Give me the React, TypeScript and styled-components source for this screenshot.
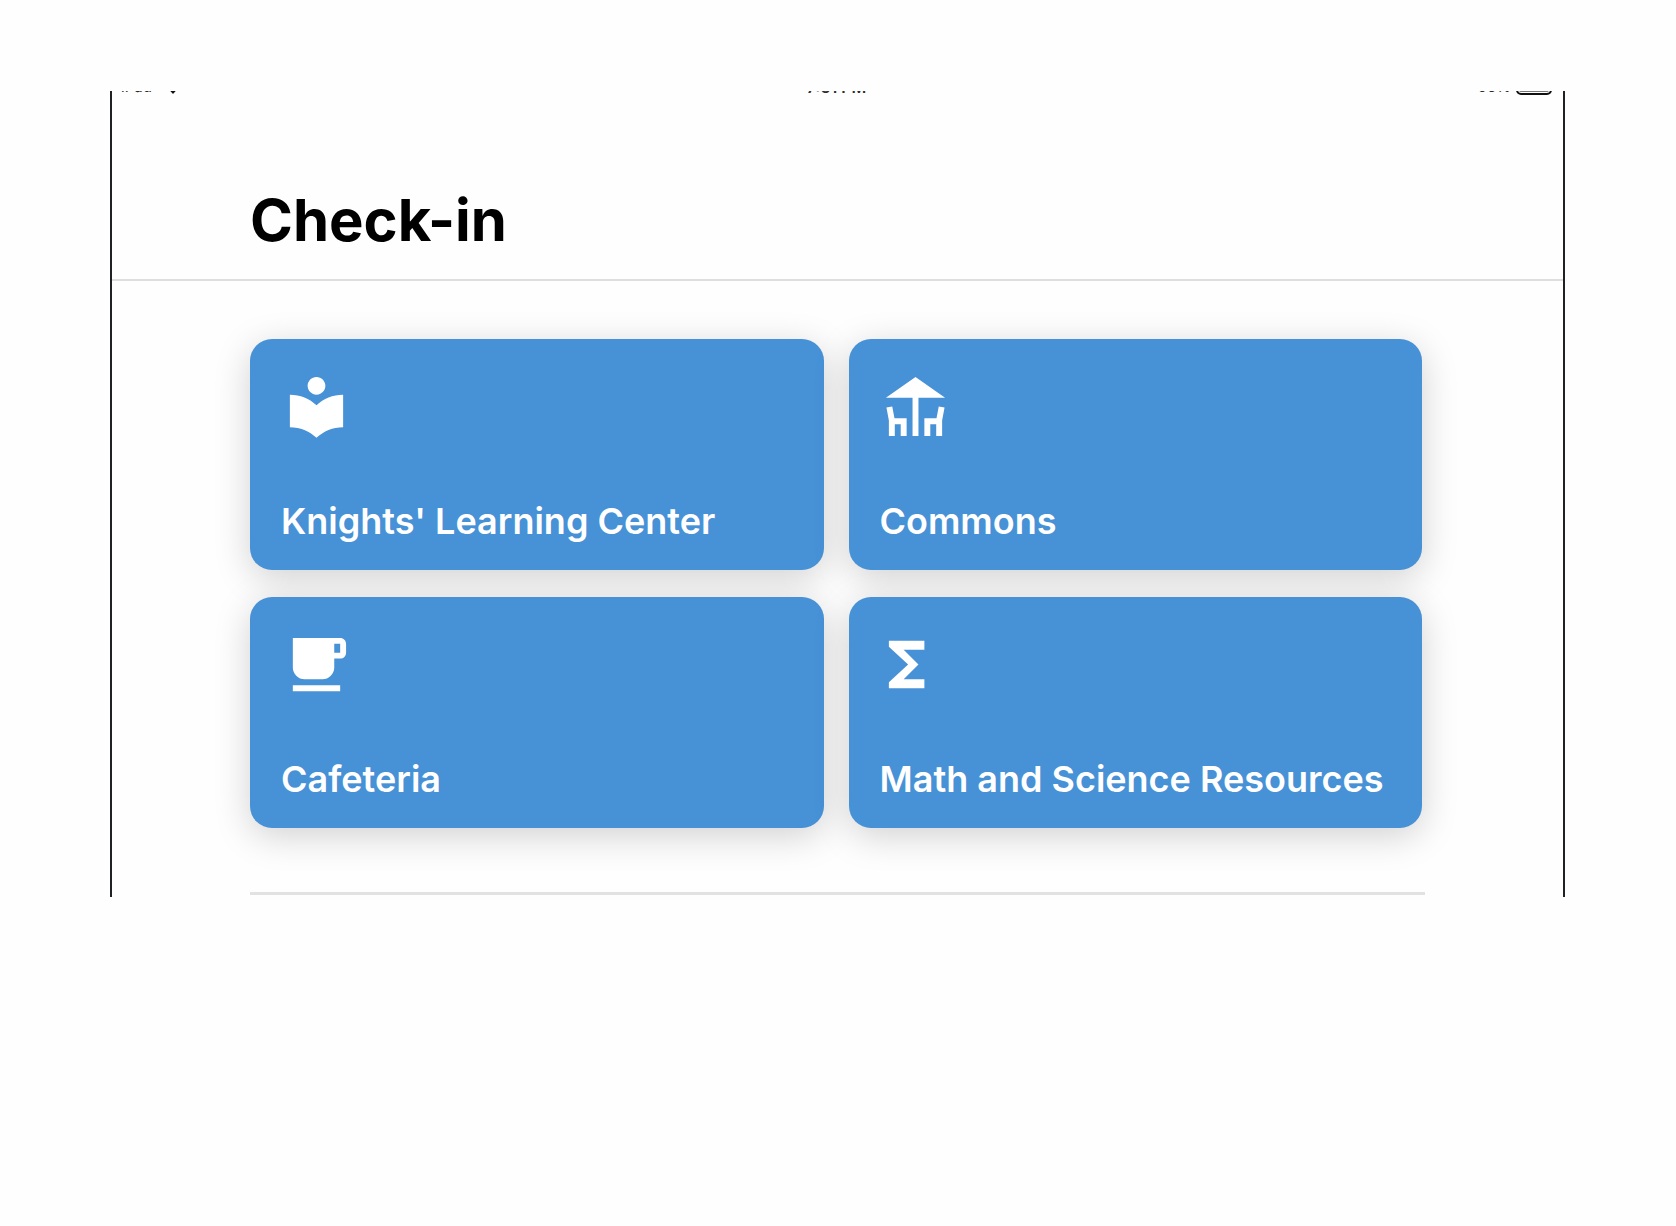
import React from "react";
import styled, { createGlobalStyle } from "styled-components";

const GlobalStyle = createGlobalStyle`
  * { box-sizing: border-box; }
  body {
    margin: 0;
    background: #fefefe;
    color: #000;
    font-family: Inter, "Liberation Sans", sans-serif;
  }
`;

const Page = styled.div`
  padding: 91px 111px 0 110px;
`;

const Screen = styled.main`
  display: flex;
  flex-direction: column;
  overflow: hidden;
  border-left: 2px solid #202124;
  border-right: 2px solid #202124;
  background: #fefefe;
`;

const StatusBar = styled.div`
  display: grid;
  grid-template-columns: 1fr auto 1fr;
  align-items: center;
  height: 20px;
  margin-top: -14px;
  padding: 0 11px 0 9px;
  font-size: 15px;
  line-height: 20px;
  color: #2b2b2b;
`;

const StatusGroup = styled.div<{ $end?: boolean }>`
  display: flex;
  align-items: center;
  justify-content: ${(p) => (p.$end ? "flex-end" : "flex-start")};
  gap: ${(p) => (p.$end ? "5px" : "12px")};
`;

const Clock = styled.time`
  font-size: 16px;
  font-weight: 600;
`;

const Battery = styled.span`
  display: flex;
  width: 36px;
  height: 16px;
  padding: 1px;
  border: 2px solid #111;
  border-radius: 5px;

  &::before {
    content: "";
    flex: 1;
    border-radius: 2px;
    background: #777;
  }
`;

const Header = styled.header`
  padding: 87px 138px 23px;
  border-bottom: 2px solid #dedede;
`;

const Title = styled.h1`
  margin: 0;
  font-size: 58px;
  line-height: 72px;
  font-weight: 700;
`;

const Content = styled.section`
  padding: 58px 138px 2px;
`;

const Grid = styled.div`
  display: grid;
  grid-template-columns: 1fr 1fr;
  gap: 27px 25px;
  padding-right: 3px;
  padding-bottom: 64px;
  border-bottom: 3px solid #e2e2e2;
`;

const Card = styled.button`
  display: flex;
  flex-direction: column;
  align-items: flex-start;
  justify-content: space-between;
  min-width: 0;
  height: 231px;
  padding: 32px 30px 27px 31px;
  border: 0;
  border-radius: 22px;
  background: #4791d6;
  box-shadow: 0 8px 36px rgba(0, 0, 0, 0.18);
  color: #fff;
  font: inherit;
  text-align: left;
  cursor: pointer;
`;

const CardIcon = styled.svg`
  width: 71px;
  height: 71px;
  fill: currentColor;
`;

const CardLabel = styled.span`
  font-size: 36px;
  line-height: 44px;
  font-weight: 600;
  white-space: nowrap;
`;

const places = [
  {
    name: "Knights' Learning Center",
    viewBox: "0 0 24 24",
    path: "M12 11.55C9.64 9.35 6.48 8 3 8v11c3.54 0 6.52 1.35 9 3.55 2.36-2.19 5.52-3.55 9-3.55V8c-3.48 0-6.64 1.35-9 3.55zM12 8c1.66 0 3-1.34 3-3s-1.34-3-3-3-3 1.34-3 3 1.34 3 3 3z",
  },
  {
    name: "Commons",
    viewBox: "0 0 24 24",
    path: "M22 9 12 2 2 9h9v13h2V9zM4.14 12l-1.96.37.82 4.37V22h2V18h2v4h2v-6H4.9zM19.1 16H15v6h2v-4h2v4h2v-5.26l.82-4.37-1.96-.37z",
  },
  {
    name: "Cafeteria",
    viewBox: "0 0 24 24",
    path: "M20 3H4v10c0 2.21 1.79 4 4 4h6c2.21 0 4-1.79 4-4v-3h2c1.11 0 2-.89 2-2V5c0-1.11-.89-2-2-2zm0 5h-2V5h2v3zM4 19h16v2H4v-2z",
  },
  {
    name: "Math and Science Resources",
    viewBox: "3 0 24 24",
    path: "M18 4H6v2l6.5 6L6 18v2h12v-3h-7l5-5-5-5h7z",
  },
];

export default function App() {
  return (
    <>
      <GlobalStyle />
      <Page>
        <Screen>
          <StatusBar>
            <StatusGroup>
              <span>iPad</span>
              <svg width="18" height="14" viewBox="0 0 18 14" aria-hidden="true">
                <path d="M9 14 0 4a13 13 0 0 1 18 0z" fill="#111" />
              </svg>
            </StatusGroup>
            <Clock>7:51 PM</Clock>
            <StatusGroup $end>
              <span>96%</span>
              <Battery />
            </StatusGroup>
          </StatusBar>
          <Header>
            <Title>Check-in</Title>
          </Header>
          <Content>
            <Grid>
              {places.map((place) => (
                <Card key={place.name} type="button">
                  <CardIcon viewBox={place.viewBox} aria-hidden="true">
                    <path d={place.path} />
                  </CardIcon>
                  <CardLabel>{place.name}</CardLabel>
                </Card>
              ))}
            </Grid>
          </Content>
        </Screen>
      </Page>
    </>
  );
}
